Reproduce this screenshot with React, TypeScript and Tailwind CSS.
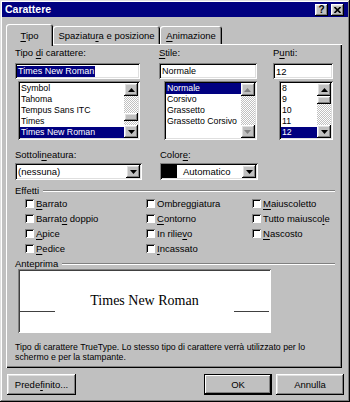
import React from "react";

const font = "font-['Liberation_Sans',Arial,sans-serif]";
const sunken =
  "shadow-[inset_1px_1px_#808080,inset_-1px_-1px_#ffffff,inset_2px_2px_#000000,inset_-2px_-2px_#dfdfdf]";
const raised =
  "shadow-[inset_-1px_-1px_#000000,inset_1px_1px_#ffffff,inset_-2px_-2px_#808080,inset_2px_2px_#dfdfdf]";
const checker =
  "bg-[repeating-conic-gradient(#ffffff_0%_25%,#c0c0c0_0%_50%)] bg-[length:2px_2px]";

function U({ children }: { children: React.ReactNode }) {
  return <span className="underline decoration-1 underline-offset-[1.5px]">{children}</span>;
}

function Tri({ up, dim }: { up?: boolean; dim?: boolean }) {
  return (
    <svg width="7" height="4" viewBox="0 0 7 4">
      <polygon points={up ? "3.5,0 7,4 0,4" : "0,0 7,0 3.5,4"} fill={dim ? "#808080" : "#000000"} />
    </svg>
  );
}

function ArrowBtn({ up, dim }: { up?: boolean; dim?: boolean }) {
  return (
    <div className={`h-[13px] w-[14px] shrink-0 bg-[#c0c0c0] ${raised} flex items-center justify-center`}>
      <Tri up={up} dim={dim} />
    </div>
  );
}

function ScrollBar({ thumb, dim }: { thumb?: "top" | "bottom"; dim?: boolean }) {
  return (
    <div className="w-[14px] h-full flex flex-col shrink-0">
      <ArrowBtn up dim={dim} />
      {thumb === "top" && <div className={`h-[8px] bg-[#c0c0c0] ${raised}`} />}
      <div className={`flex-1 ${checker}`} />
      {thumb === "bottom" && (
        <>
          <div className={`h-[8px] bg-[#c0c0c0] ${raised}`} />
          <div className={`h-[4px] ${checker}`} />
        </>
      )}
      <ArrowBtn dim={dim} />
    </div>
  );
}

function ListBox({
  items,
  selected,
  className,
  thumb,
  dim,
}: {
  items: string[];
  selected: string;
  className: string;
  thumb?: "top" | "bottom";
  dim?: boolean;
}) {
  return (
    <div className={`bg-white ${sunken} p-[2px] flex ${className}`}>
      <div className="flex-1 min-w-0 overflow-hidden flex flex-col text-[8.75px]">
        {items.map((it) => (
          <div
            key={it}
            className={`h-[11px] leading-[11px] pl-[1px] whitespace-nowrap ${
              it === selected ? "bg-[#000080] text-white" : "text-black"
            }`}
          >
            {it}
          </div>
        ))}
      </div>
      <ScrollBar thumb={thumb} dim={dim} />
    </div>
  );
}

function Check({ children }: { children: React.ReactNode }) {
  return (
    <div className="h-[15px] flex items-center gap-[2px]">
      <div className="w-[9px] h-[9px] bg-white shadow-[inset_1px_1px_#808080,inset_-1px_-1px_#ffffff,inset_2px_2px_#000000]" />
      <span className="leading-[11px]">{children}</span>
    </div>
  );
}

function GroupLabel({ children, className }: { children: React.ReactNode; className: string }) {
  return (
    <div className={`flex items-center ${className}`}>
      <span className="pr-[4px]">{children}</span>
      <div className="flex-1 border-t border-t-[#808080] border-b border-b-white" />
    </div>
  );
}

export default function App() {
  return (
    <div
      className={`w-[350px] h-[402px] bg-[#c0c0c0] p-[2px] flex flex-col text-[9.5px] text-black ${font} shadow-[inset_-1px_-1px_#000000,inset_1px_1px_#dfdfdf,inset_-2px_-2px_#808080,inset_2px_2px_#ffffff]`}
    >
      {/* title bar */}
      <div className="h-[15px] bg-[#000080] flex items-center justify-between pl-[3px] pr-[4px] shrink-0">
        <span className="text-white font-bold text-[10.5px] leading-[15px]">Carattere</span>
        <div className="flex gap-[3px]">
          <div className={`w-[13px] h-[12px] bg-[#c0c0c0] ${raised} flex items-center justify-center`}>
            <span className="font-bold text-[10px] leading-[10px] text-black">?</span>
          </div>
          <div className={`w-[13px] h-[12px] bg-[#c0c0c0] ${raised} flex items-center justify-center`}>
            <svg width="7" height="6" viewBox="0 0 7 6">
              <path d="M0.5 0 L6.5 6 M6.5 0 L0.5 6" stroke="#000000" strokeWidth="1.6" />
            </svg>
          </div>
        </div>
      </div>

      {/* tabs */}
      <div className="mt-[7px] ml-[4px] h-[20px] flex items-end relative z-10 shrink-0">
        <div className="w-[47px] h-[22px] -mb-[2px] bg-[#c0c0c0] rounded-t-[3px] shadow-[inset_1px_1px_#ffffff,inset_-1px_0_#000000,inset_-2px_0_#808080] flex justify-center pt-[6px] leading-[11px]">
          <span>
            <U>T</U>ipo
          </span>
        </div>
        <div className="w-[107px] h-[18px] rounded-t-[3px] shadow-[inset_1px_1px_#ffffff,inset_-1px_0_#000000,inset_-2px_0_#808080] flex justify-center pt-[4px] leading-[11px]">
          <span>
            Spaziatu<U>r</U>a e posizione
          </span>
        </div>
        <div className="w-[62px] h-[18px] rounded-t-[3px] shadow-[inset_1px_1px_#ffffff,inset_-1px_0_#000000,inset_-2px_0_#808080] flex justify-center pt-[4px] leading-[11px]">
          <span>
            <U>A</U>nimazione
          </span>
        </div>
      </div>

      {/* panel */}
      <div className="ml-[4px] w-[336px] h-[324px] shrink-0 px-[9px] pt-[3px] shadow-[inset_1px_1px_#ffffff,inset_-1px_-1px_#000000,inset_-2px_-2px_#808080] flex flex-col">
        <div className="flex items-start">
          <div className="w-[145px] flex flex-col">
            <div className="h-[11px] leading-[11px]">
              Tipo <U>d</U>i carattere:
            </div>
            <div className={`mt-[5px] h-[16px] w-[125px] bg-white ${sunken} px-[2px] py-[2px] flex items-center`}>
              <span className="bg-[#000080] text-white leading-[11px] px-[1px] text-[9px]">Times New Roman</span>
            </div>
            <ListBox
              className="mt-[2px] ml-[3px] w-[122px] h-[59px]"
              items={["Symbol", "Tahoma", "Tempus Sans ITC", "Times", "Times New Roman"]}
              selected="Times New Roman"
              thumb="bottom"
            />
          </div>
          <div className="w-[115px] flex flex-col">
            <div className="h-[11px] leading-[11px]">
              <U>S</U>tile:
            </div>
            <div className={`mt-[5px] h-[16px] w-[98px] bg-white ${sunken} px-[3px] flex items-center leading-[11px] text-[9px]`}>
              Normale
            </div>
            <ListBox
              className="mt-[2px] ml-[5px] w-[93px] h-[59px]"
              items={["Normale", "Corsivo", "Grassetto", "Grassetto Corsivo"]}
              selected="Normale"
              dim
            />
          </div>
          <div className="w-[60px] flex flex-col">
            <div className="h-[11px] leading-[11px]">
              P<U>u</U>nti:
            </div>
            <div className={`mt-[5px] h-[16px] w-[60px] bg-white ${sunken} px-[3px] flex items-center leading-[11px]`}>
              12
            </div>
            <ListBox
              className="mt-[2px] ml-[6px] w-[54px] h-[59px]"
              items={["8", "9", "10", "11", "12"]}
              selected="12"
              thumb="top"
            />
          </div>
        </div>

        <div className="mt-[9px] flex items-start">
          <div className="w-[145px] flex flex-col">
            <div className="h-[11px] leading-[11px]">
              Sottoli<U>n</U>eatura:
            </div>
            <div className={`mt-[3px] h-[17px] w-[127px] bg-white ${sunken} p-[2px] flex items-center`}>
              <span className="flex-1 pl-[1px] leading-[11px]">(nessuna)</span>
              <ArrowBtn />
            </div>
          </div>
          <div className="w-[98px] flex flex-col">
            <div className="h-[11px] leading-[11px]">
              Color<U>e</U>:
            </div>
            <div className={`mt-[3px] h-[17px] w-[98px] bg-white ${sunken} p-[2px] flex items-center`}>
              <div className="w-[15px] h-[13px] bg-black" />
              <span className="flex-1 pl-[6px] leading-[11px]">Automatico</span>
              <ArrowBtn />
            </div>
          </div>
        </div>

        <GroupLabel className="mt-[5px] h-[11px] leading-[11px] w-[320px]">Effetti</GroupLabel>
        <div className="pl-[10px] grid grid-cols-[121px_106px_1fr]">
          <Check>
            <U>B</U>arrato
          </Check>
          <Check>Ombreggiatura</Check>
          <Check>
            <U>M</U>aiuscoletto
          </Check>
          <Check>
            Barrat<U>o</U> doppio
          </Check>
          <Check>
            <U>C</U>ontorno
          </Check>
          <Check>
            Tutto maiusco<U>l</U>e
          </Check>
          <Check>
            <U>A</U>pice
          </Check>
          <Check>
            In rilie<U>v</U>o
          </Check>
          <Check>
            <U>N</U>ascosto
          </Check>
          <Check>
            <U>P</U>edice
          </Check>
          <Check>
            <U>I</U>ncassato
          </Check>
          <div />
        </div>

        <GroupLabel className="mt-[3px] h-[10px] leading-[10px] w-[320px]">Anteprima</GroupLabel>
        <div className="ml-[3px] w-[253px] h-[64px] bg-white shadow-[inset_1px_1px_#808080,inset_-1px_-1px_#ffffff,inset_2px_2px_#404040] flex items-center">
          <div className="w-[35px] ml-[2px] h-[1px] bg-[#404040] mt-[20px]" />
          <span className="flex-1 text-center font-['Liberation_Serif','Times_New_Roman',serif] text-[14px] leading-[16px]">
            Times New Roman
          </span>
          <div className="w-[35px] mr-[2px] h-[1px] bg-[#404040] mt-[20px]" />
        </div>
        <div className="mt-[9px] leading-[10px] text-[8.75px]">
          Tipo di carattere TrueType. Lo stesso tipo di carattere verrà utilizzato per lo
          <br />
          schermo e per la stampante.
        </div>
      </div>

      {/* buttons */}
      <div className="mt-[6px] flex items-start shrink-0">
        <div className={`ml-[5px] w-[69px] h-[21px] bg-[#c0c0c0] ${raised} flex items-center justify-center leading-[11px]`}>
          <span>
            Prede<U>f</U>inito...
          </span>
        </div>
        <div className="flex-1" />
        <div className="w-[68px] h-[21px] bg-[#c0c0c0] shadow-[inset_0_0_0_1px_#000000,inset_-2px_-2px_#000000,inset_2px_2px_#ffffff,inset_-3px_-3px_#808080] flex items-center justify-center leading-[11px]">
          OK
        </div>
        <div className={`ml-[4px] mr-[4px] w-[68px] h-[21px] bg-[#c0c0c0] ${raised} flex items-center justify-center leading-[11px]`}>
          Annulla
        </div>
      </div>
    </div>
  );
}
